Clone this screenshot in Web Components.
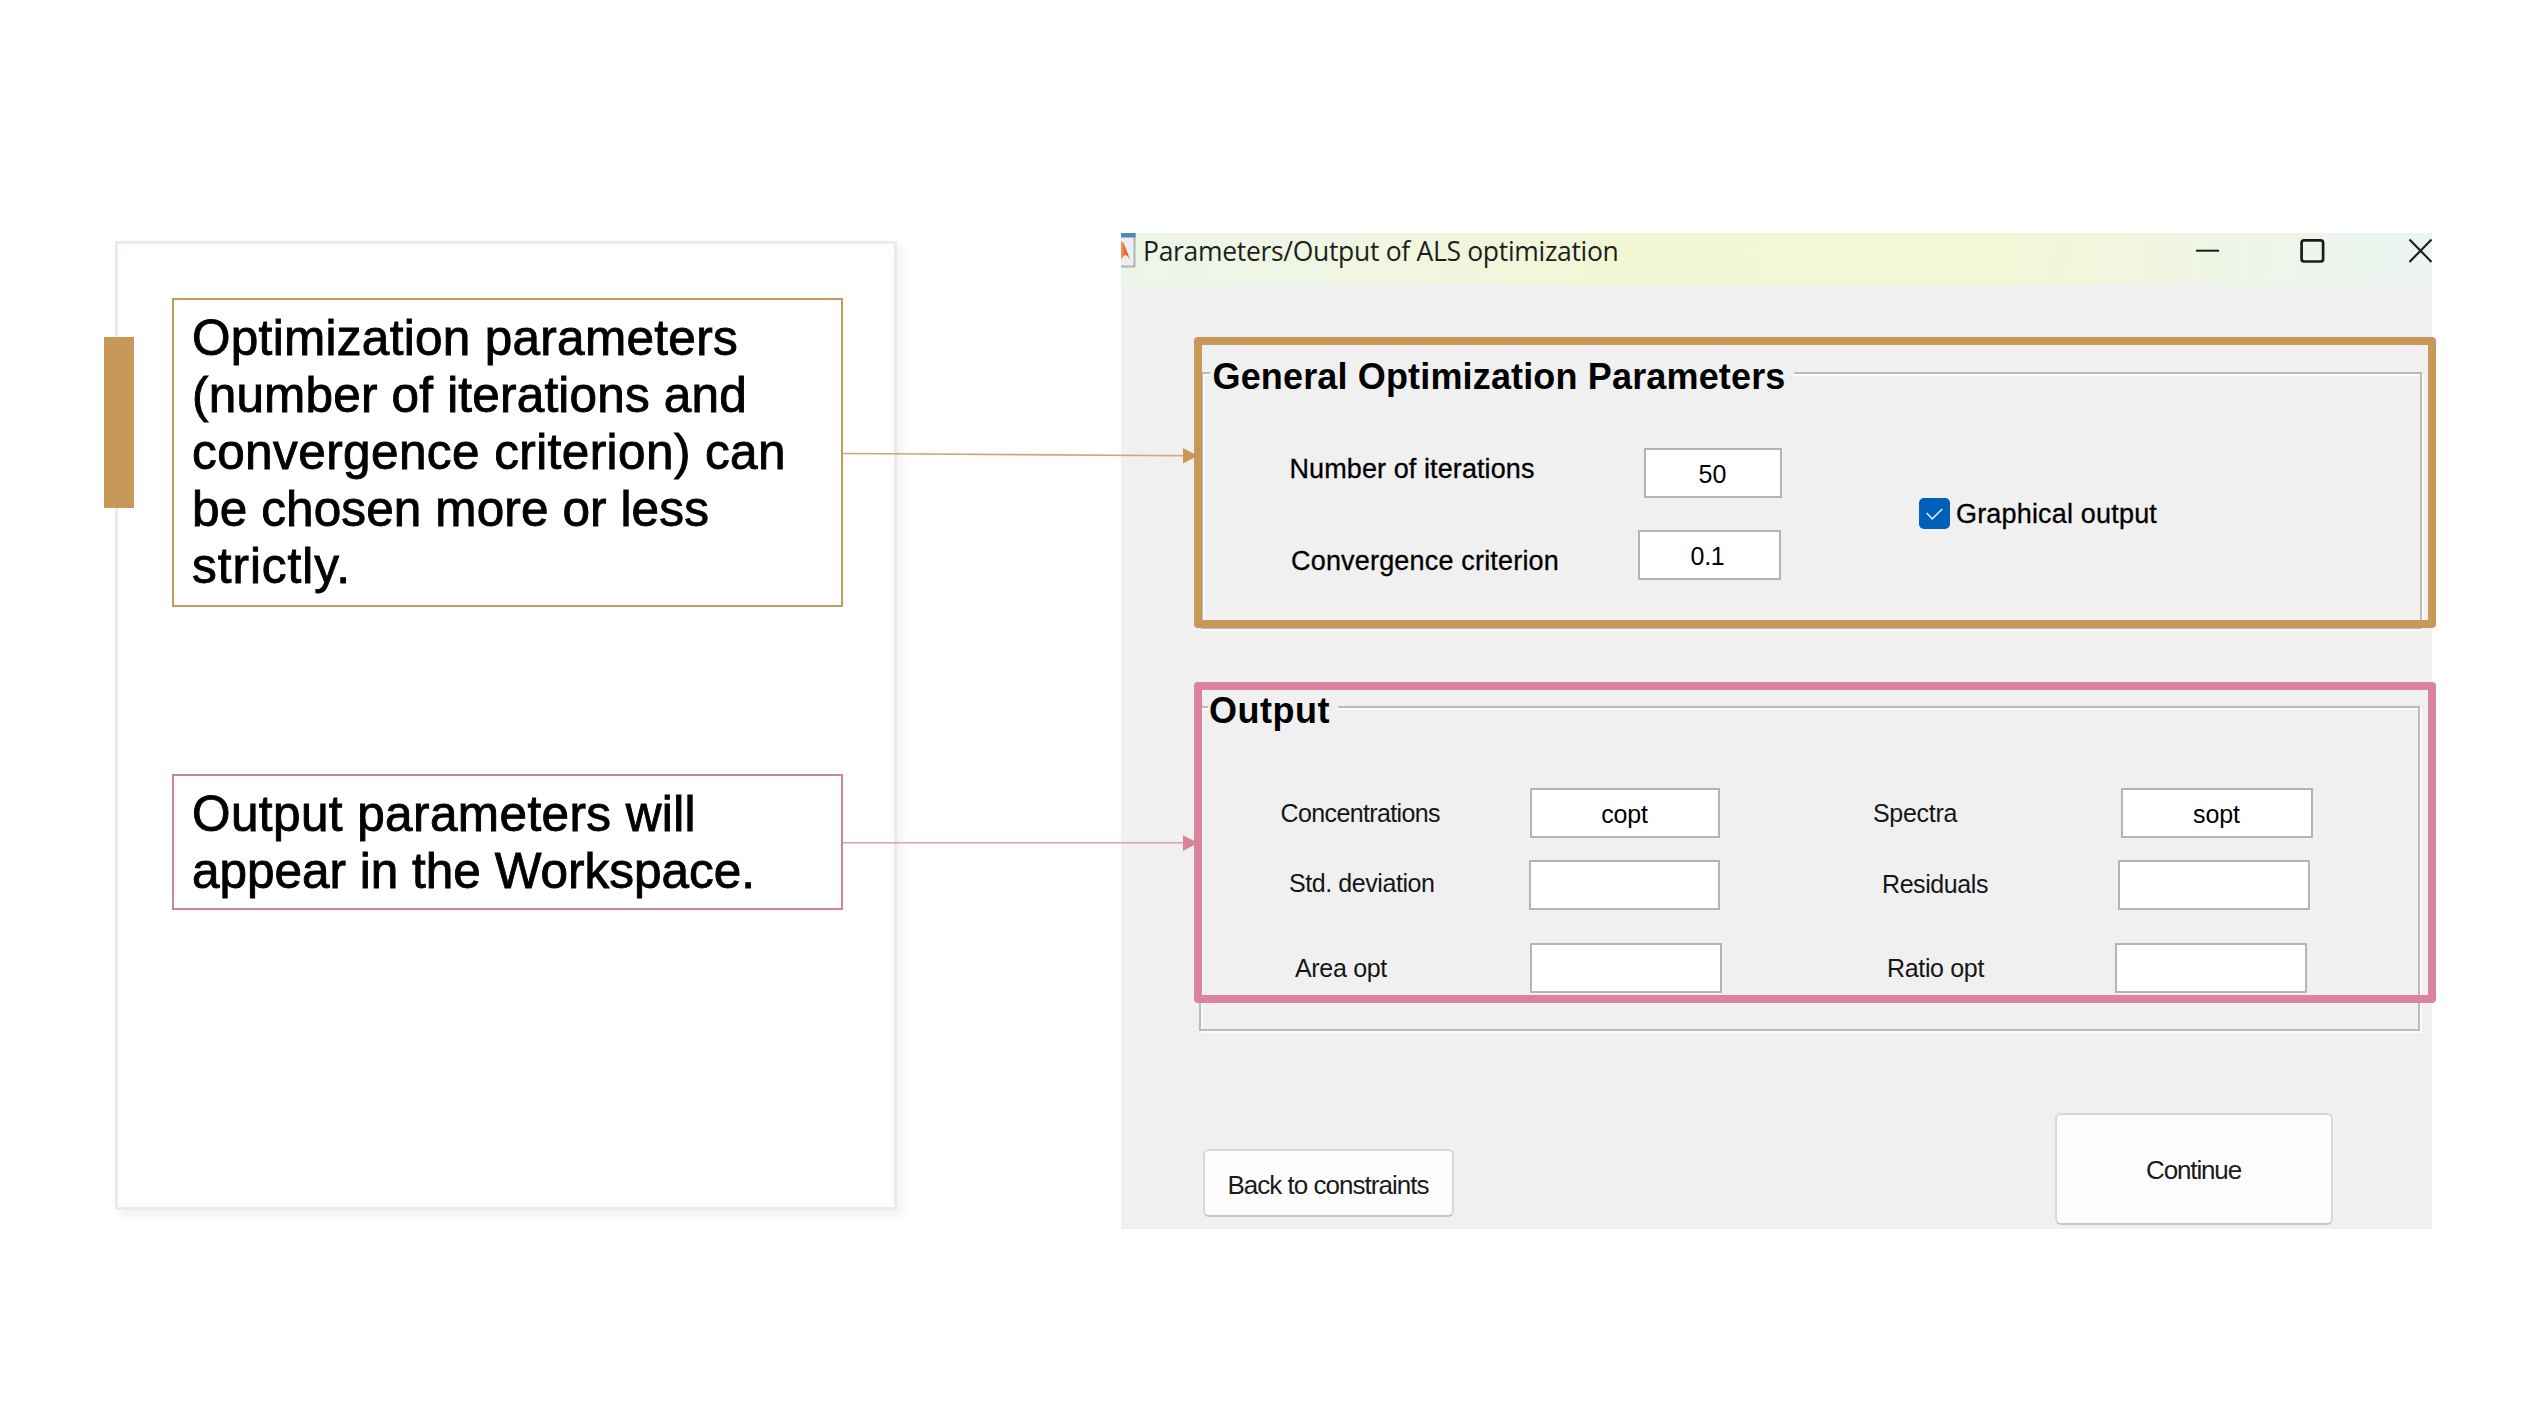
<!DOCTYPE html>
<html lang="en">
<head>
<meta charset="utf-8">
<title>Parameters/Output of ALS optimization</title>
<style>
  html, body { margin: 0; background: #fff; overflow: hidden; }
  body { font-family: "Liberation Sans", Arial, sans-serif; color: #000; }
</style>
</head>
<body>
<als-slide></als-slide>

<script>
const define = (name, markup, setup) => {
  const template = document.createElement('template');
  template.innerHTML = markup.trim();
  customElements.define(name, class extends HTMLElement {
    connectedCallback() {
      if (this.shadowRoot) return;
      this.attachShadow({ mode: 'open' }).append(template.content.cloneNode(true));
      if (setup) setup(this, this.shadowRoot);
    }
  });
};

/* One line of text whose tracking is set so that it fills the given width. */
define('fit-text', `<style>:host{display:block;white-space:nowrap;flex:none} span{display:block;width:max-content}</style><span><slot></slot></span>`, (host, root) => {
  const span = root.querySelector('span');
  const natural = span.getBoundingClientRect().width;
  const count = host.textContent.length;
  host.style.letterSpacing = ((+host.getAttribute('w') - natural) / count).toFixed(3) + 'px';
});

/* Outlined note on the left-hand card. */
define('note-box', `
  <style>
    :host{display:block;box-sizing:border-box;border:2px solid var(--tone);padding:9px 0 0 18px;
      font-size:49.5px;line-height:57.1px;width:671px;-webkit-text-stroke:.9px #000}
  </style>
  <slot></slot>`);

define('note-card', `
  <style>
    :host{display:flex;flex-direction:column;box-sizing:border-box;width:782px;height:969px;
      border:3px solid #efe9eb;background:#fff;box-shadow:5px 6px 7px rgba(90,50,70,.07);
      padding:54px 0 0 54px}
    .one{height:309px} .two{height:136px;margin-top:167px}
  </style>
  <note-box class="one" style="--tone:#c49a5f">
    <fit-text w="546">Optimization parameters</fit-text>
    <fit-text w="555">(number of iterations and</fit-text>
    <fit-text w="594">convergence criterion) can</fit-text>
    <fit-text w="517">be chosen more or less</fit-text>
    <fit-text w="159">strictly.</fit-text>
  </note-box>
  <note-box class="two" style="--tone:#cd859d">
    <fit-text w="504">Output parameters will</fit-text>
    <fit-text w="563">appear in the Workspace.</fit-text>
  </note-box>`);

define('title-bar', `
  <style>
    :host{display:flex;height:52px;align-items:flex-start;
      background:linear-gradient(97deg,#edf5ea 0%,#f0f6e0 22%,#f1f7d3 40%,#f2f7d6 66%,#f0f5e2 80%,#ecf4ee 94%,#ebf4ef 100%)}
    .logo{flex:none;margin-right:7px}
    .title{font:26.500px/36.500px "Open Sans","Noto Sans",sans-serif;color:#1e1f1c;margin-right:auto}
    .controls{flex:none;margin-top:4px}
  </style>
  <svg class="logo" width="15" height="35" viewBox="0 0 15 35">
    <defs><linearGradient id="f" x1="0" x2="1"><stop offset="0" stop-color="#f6a04d"/><stop offset=".45" stop-color="#e8682f"/><stop offset="1" stop-color="#d8522a"/></linearGradient></defs>
    <rect x="0" y="0" width="14.500" height="34.5" fill="#b0b2b5"/>
    <rect x="0" y="0" width="12.500" height="32.500" fill="#eceef2"/>
    <rect x="0" y="0" width="14.500" height="4.500" fill="#5585b4"/>
    <path d="M0 9 Q2 7.500 3.500 12 L9 26.500 Q6 21.500 4 22 Q2 23 0 27 Z" fill="url(#f)"/>
  </svg>
  <fit-text class="title" w="475.500">Parameters/Output of ALS optimization</fit-text>
  <svg class="controls" width="238" height="28" viewBox="0 0 238 28" fill="none" stroke="#1a1c1a">
    <path d="M2 13.700H25" stroke-width="2"/>
    <rect x="107.600" y="3.300" width="21.500" height="21.200" rx="2.500" stroke-width="2.700"/>
    <path d="M215.500 2.500L237.500 25M237.500 2.500L215.500 25" stroke-width="2.100"/>
  </svg>`);

/* Titled group with an etched border. */
define('etched-group', `
  <style>
    :host{display:block;box-sizing:border-box;border:2px solid #bababb;
      box-shadow:2px 2px 0 #fbfbfb, inset 2px 2px 0 #fbfbfb}
    .legend{display:flow-root;width:max-content;margin:-18px 0 0 7px;padding:0 8px 0 var(--in,1px);background:#f0f0f0;
      font-weight:bold;font-size:36px;line-height:42px}
  </style>
  <div class="legend"><slot name="legend"></slot></div>
  <slot></slot>`);

define('text-field', `
  <style>
    :host{display:flex;flex:none;box-sizing:border-box;height:50px;border:2px solid #b3b4b7;background:#fff;
      justify-content:center;align-items:center;padding:2px 1px 0 0;font-size:25px;line-height:32px}
  </style>
  <slot></slot>`);

define('form-label', `
  <style>
    :host{display:block;flex:none;box-sizing:border-box;font-size:var(--size,25px);line-height:var(--lh,32px);
      color:var(--ink,#161616);-webkit-text-stroke:var(--weight,0) currentColor}
  </style>
  <slot></slot>`);

define('form-row', `
  <style>:host{display:flex;height:50px;align-items:flex-start}</style>
  <slot></slot>`);

define('check-option', `
  <style>
    :host{display:flex;align-items:flex-start;font-size:27px;line-height:34px;-webkit-text-stroke:.3px #000}
    svg{flex:none;margin-right:6px} .t{margin-top:-1px}
  </style>
  <svg width="31" height="31" viewBox="0 0 31 31"><rect width="31" height="31" rx="5" fill="#005fb8"/>
    <path d="M7.600 15L13.300 20.800L23.200 11" fill="none" stroke="#d5e8f8" stroke-width="1.700"/></svg>
  <div class="t"><slot></slot></div>`);

define('push-button', `
  <style>
    :host{display:flex;flex:none;box-sizing:border-box;justify-content:center;align-items:center;
      border:2px solid #d8d8d8;border-bottom-color:#c6c6c6;border-radius:6px;background:#fdfdfd;
      font-size:26px;line-height:32px;color:#1a1a1a}
  </style>
  <slot></slot>`);

define('als-dialog', `
  <style>
    :host{display:flex;flex-direction:column;width:1311px;height:995.500px;background:#f0f0f0}
    .body{flex:1;display:flex;flex-direction:column;padding:87px 0 0 80px}
    .g1{width:1221px;height:257px;--in:2.500px} .g2{width:1221px;height:325px;margin:77px 0 0 -2px}
    .cols{display:flex;margin-top:50px;padding-left:86px;--size:27px;--lh:34px;--ink:#000;--weight:.3px}
    .left{width:630px;display:flex;flex-direction:column;gap:32px}
    .rows{display:flex;flex-direction:column;margin-top:56px;padding-left:79px}
    .foot{flex:1;display:flex;align-items:flex-end;justify-content:space-between;padding:0 99px 3.500px 2px}
    .back{width:251px;height:68px;margin-bottom:8px;padding:4px 1px 0 0} .next{width:278px;height:112px;padding:1px 1px 0 0}
  </style>
  <title-bar></title-bar>
  <div class="body">
    <etched-group class="g1">
      <fit-text slot="legend" w="573">General Optimization Parameters</fit-text>
      <div class="cols">
        <div class="left">
          <form-row>
            <form-label style="width:355px;padding-left:.5px;margin-top:4px"><fit-text w="245">Number of iterations</fit-text></form-label>
            <text-field style="width:138px"><fit-text w="28">50</fit-text></text-field>
          </form-row>
          <form-row>
            <form-label style="width:349px;padding-left:2px;margin-top:14px"><fit-text w="268">Convergence criterion</fit-text></form-label>
            <text-field style="width:143px;padding-right:4px"><fit-text w="34">0.1</fit-text></text-field>
          </form-row>
        </div>
        <check-option style="margin-top:50px"><fit-text w="201">Graphical output</fit-text></check-option>
      </div>
    </etched-group>
    <etched-group class="g2">
      <fit-text slot="legend" w="121">Output</fit-text>
      <div class="rows">
        <form-row>
          <form-label style="width:250px;padding-left:.5px;margin-top:9px"><fit-text w="159.500">Concentrations</fit-text></form-label>
          <text-field style="width:190px"><fit-text w="46.500">copt</fit-text></text-field>
          <form-label style="width:401px;padding-left:153px;margin-top:9px"><fit-text w="84">Spectra</fit-text></form-label>
          <text-field style="width:192px"><fit-text w="47">sopt</fit-text></text-field>
        </form-row>
        <form-row style="margin-top:22px">
          <form-label style="width:249px;padding-left:9px;margin-top:7px"><fit-text w="145.500">Std. deviation</fit-text></form-label>
          <text-field style="width:191px"></text-field>
          <form-label style="width:398px;padding-left:162px;margin-top:8px"><fit-text w="106">Residuals</fit-text></form-label>
          <text-field style="width:192px"></text-field>
        </form-row>
        <form-row style="margin-top:33px">
          <form-label style="width:250px;padding-left:15px;margin-top:9px"><fit-text w="92">Area opt</fit-text></form-label>
          <text-field style="width:192px"></text-field>
          <form-label style="width:393px;padding-left:165px;margin-top:9px"><fit-text w="97">Ratio opt</fit-text></form-label>
          <text-field style="width:192px"></text-field>
        </form-row>
      </div>
    </etched-group>
    <div class="foot">
      <push-button class="back"><fit-text w="201">Back to constraints</fit-text></push-button>
      <push-button class="next"><fit-text w="95">Continue</fit-text></push-button>
    </div>
  </div>`);

/* Coloured outline drawn over a part of the dialog. */
define('callout-frame', `
  <style>:host{display:block;position:absolute;box-sizing:border-box;left:1194px;width:1242px;border:8px solid var(--tone);border-radius:4px}</style>`);

/* Arrows from the notes to the outlined parts, and the accent bar on the card edge. */
define('slide-overlay', `
  <style>:host{display:block;position:absolute;inset:0} svg{position:absolute;left:0;top:0} </style>
  <callout-frame style="--tone:#c89859;top:337px;height:291px"></callout-frame>
  <callout-frame style="--tone:#d9839c;top:682px;height:321px"></callout-frame>
  <svg width="2539" height="1428" viewBox="0 0 2539 1428">
    <rect x="104" y="337" width="30" height="171" fill="#c89859"/>
    <path d="M843 453.500L1185 455.700" stroke="#cfa878" stroke-width="1.600"/>
    <path d="M1183 448L1198 455.700L1183 463.500Z" fill="#c89859"/>
    <path d="M843 842.700H1185" stroke="#d9a0b2" stroke-width="1.600"/>
    <path d="M1183 835.300L1198 843L1183 851Z" fill="#d9839c"/>
  </svg>`);

define('als-slide', `
  <style>
    :host{display:flex;position:relative;box-sizing:border-box;width:2539px;height:1428px;
      padding:233px 0 0 115px;gap:224px;align-items:flex-start;background:#fff}
    note-card{margin-top:8px;flex:none} als-dialog{flex:none}
  </style>
  <note-card></note-card>
  <als-dialog></als-dialog>
  <slide-overlay></slide-overlay>`);
</script>
</body>
</html>
